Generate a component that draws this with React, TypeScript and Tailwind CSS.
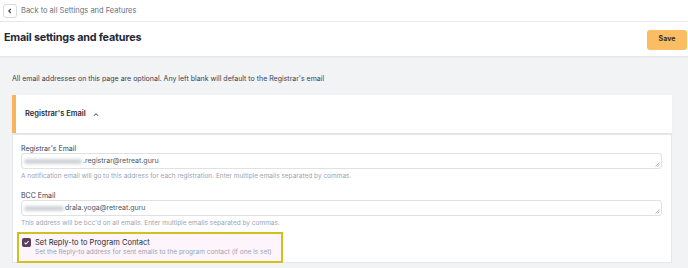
import React from "react";

function Blur({ w }: { w: number }) {
  return (
    <span
      className="inline-block h-[5px] rounded-full bg-[#cfd2d6] blur-[1.5px] align-middle mr-[1px]"
      style={{ width: w }}
    />
  );
}

function Field({
  label,
  blurW,
  value,
  help,
}: {
  label: string;
  blurW: number;
  value: string;
  help: string;
}) {
  return (
    <div className="flex flex-col">
      <div className="text-[7px] leading-[8px] text-[#374151]">{label}</div>
      <div className="relative h-[16px] rounded-[3px] border border-[#dfe1e5] bg-white flex items-center pl-[2px]">
        <Blur w={blurW} />
        <span className="text-[7px] text-[#4b5563]">{value}</span>
        <svg className="absolute right-[1px] bottom-[1px]" width="5" height="5" viewBox="0 0 5 5">
          <path d="M4.5 0.5 L0.5 4.5 M4.5 2.5 L2.5 4.5" stroke="#9ca3af" strokeWidth="0.8" />
        </svg>
      </div>
      <div className="mt-[3px] text-[6.5px] leading-[9px] text-[#9ca3af] whitespace-nowrap">{help}</div>
    </div>
  );
}

export default function App() {
  return (
    <div className="w-[688px] h-[268px] overflow-hidden bg-[#f2f3f5] font-['Inter',sans-serif]">
      <div className="h-[22px] bg-white border-b border-[#e8e9ec] flex items-center pl-[3px] gap-[4px]">
        <div className="w-[14px] h-[14px] rounded-[3px] border border-[#d9dbdf] flex items-center justify-center">
          <svg width="6" height="6" viewBox="0 0 6 6">
            <path d="M3.8 1 L1.8 3 L3.8 5" stroke="#374151" strokeWidth="1.1" fill="none" />
          </svg>
        </div>
        <span className="text-[7.5px] text-[#6b7280]">Back to all Settings and Features</span>
      </div>
      <div className="h-[34px] bg-white flex items-center justify-between pl-[4px] pr-[1px] shadow-[0_1px_2px_rgba(0,0,0,0.08)] relative z-10">
        <span className="text-[10.8px] font-bold text-[#1f2937] tracking-[-0.2px] -mt-[2px]">Email settings and features</span>
        <button className="w-[40px] h-[20px] rounded-[3px] bg-[#fbbd64] text-[7px] font-bold text-[#3b2f1a] mt-[1px]">
          Save
        </button>
      </div>
      <div className="px-[12px] pr-[16px]">
        <p className="mt-[18px] text-[7px] leading-[9px] text-[#374151]">
          All email addresses on this page are optional. Any left blank will default to the Registrar's email
        </p>
        <div className="mt-[12px] h-[38px] bg-white border-l-[4px] border-[#f6b55a] flex items-center pl-[9px] gap-[7px] shadow-[0_1px_1px_rgba(0,0,0,0.06)]">
          <span className="text-[7.5px] font-semibold text-[#1f2937]">Registrar's Email</span>
          <svg width="6" height="5" viewBox="0 0 6 5">
            <path d="M1 3.8 L3 1.6 L5 3.8" stroke="#374151" strokeWidth="1" fill="none" />
          </svg>
        </div>
        <div className="mt-[1px] h-[129px] bg-white border border-[#e6e7ea] pl-[8px] pr-[9px] pt-[10px]">
          <Field
            label="Registrar's Email"
            blurW={58}
            value=".registrar@retreat.guru"
            help="A notification email will go to this address for each registration. Enter multiple emails separated by commas."
          />
          <div className="mt-[11px]">
            <Field
              label="BCC Email"
              blurW={40}
              value="drala.yoga@retreat.guru"
              help="This address will be bcc'd on all emails. Enter multiple emails separated by commas."
            />
          </div>
          <div className="mt-[4px] -ml-[4px] w-[266px] h-[31px] border-[2px] border-[#d0c21c] bg-[#fdf5fb] flex items-start pl-[3px] pt-[3px] gap-[4px]">
            <div className="shrink-0 w-[9px] h-[9px] rounded-[2px] bg-[#5b3d5c] flex items-center justify-center mt-[1px]">
              <svg width="7" height="7" viewBox="0 0 7 7">
                <path d="M1.5 3.6 L2.9 5 L5.6 2" stroke="white" strokeWidth="1.1" fill="none" />
              </svg>
            </div>
            <div className="flex flex-col whitespace-nowrap">
              <span className="text-[7.5px] leading-[11px] text-[#1f2937]">Set Reply-to to Program Contact</span>
              <span className="text-[6.5px] leading-[9px] text-[#9ca3af]">
                Set the Reply-to address for sent emails to the program contact (if one is set)
              </span>
            </div>
          </div>
        </div>
      </div>
    </div>
  );
}
